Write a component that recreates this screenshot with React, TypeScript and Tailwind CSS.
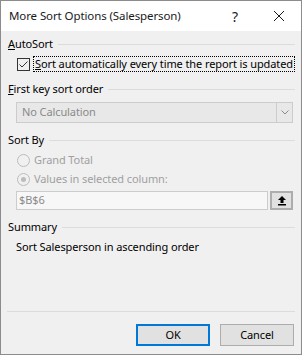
import React from "react";

const font = { fontFamily: '"Noto Sans", "Open Sans", sans-serif' };

function GroupHeader({ children }: { children: React.ReactNode }) {
  return (
    <div className="flex h-[14px] items-center pl-[7px] pr-[6px]">
      <span className="whitespace-nowrap text-[11px] leading-[14px] text-black">{children}</span>
      <div className="ml-[5px] h-px flex-1 bg-[#dcdcdc]" />
    </div>
  );
}

function Radio({ checked }: { checked?: boolean }) {
  return (
    <div className="flex h-[13px] w-[13px] items-center justify-center rounded-full border border-[#bcbcbc] bg-[#f0f0f0]">
      {checked && <div className="h-[5px] w-[5px] rounded-full bg-[#bcbcbc]" />}
    </div>
  );
}

export default function App() {
  return (
    <div
      style={font}
      className="flex h-[355px] w-[302px] flex-col border border-[#8c8c8c] bg-[#f0f0f0] text-[11px] tracking-[-0.1px] text-black"
    >
      <div className="flex h-[30px] shrink-0 items-center bg-white pl-[8px]">
        <span className="flex-1 whitespace-nowrap text-[11.5px] text-[#1a1a1a]">More Sort Options (Salesperson)</span>
        <span className="mr-[35px] text-[14px] text-[#1a1a1a]">?</span>
        <svg width="12" height="12" viewBox="0 0 12 12" className="mr-[16px]">
          <path d="M1 1 L11 11 M11 1 L1 11" stroke="#1a1a1a" strokeWidth="1" />
        </svg>
      </div>

      <div className="mt-[6px]">
        <GroupHeader>
          <span className="underline">A</span>utoSort
        </GroupHeader>
      </div>

      <div className="mt-[5px] flex h-[16px] items-center pl-[16px]">
        <div className="flex h-[13px] w-[13px] items-center justify-center border border-[#333] bg-[#f0f0f0]">
          <svg width="11" height="11" viewBox="0 0 11 11">
            <path d="M1.5 5.5 L4 8 L9.5 2.5" stroke="#333" strokeWidth="1" fill="none" />
          </svg>
        </div>
        <div className="ml-[3px] flex h-[16px] w-[262px] items-center border border-dotted border-black px-[1px]">
          <span className="whitespace-nowrap text-[11px] leading-[14px]">
            <span className="underline">S</span>ort automatically every time the report is updated
          </span>
        </div>
      </div>

      <div className="mt-[10px]">
        <GroupHeader>
          <span className="underline">F</span>irst key sort order
        </GroupHeader>
      </div>

      <div className="ml-[15px] mr-[8px] mt-[6px] flex h-[21px] items-center border border-[#cccccc] bg-[#e8e8e8]">
        <span className="flex-1 pl-[5px] text-[11px] text-[#8a8a8a]">No Calculation</span>
        <div className="flex h-full w-[16px] items-center justify-center border-l border-[#cccccc]">
          <svg width="8" height="5" viewBox="0 0 8 5">
            <path d="M0.5 0.5 L4 4 L7.5 0.5" stroke="#8a8a8a" strokeWidth="1" fill="none" />
          </svg>
        </div>
      </div>

      <div className="mt-[10px]">
        <GroupHeader>Sort By</GroupHeader>
      </div>

      <div className="mt-[5px] flex h-[16px] items-center pl-[16px]">
        <Radio />
        <span className="ml-[4px] text-[11px] text-[#a0a0a0]">Grand Total</span>
      </div>
      <div className="mt-[3px] flex h-[16px] items-center pl-[16px]">
        <Radio checked />
        <span className="ml-[4px] text-[11px] text-[#a0a0a0]">Values in selected column:</span>
      </div>

      <div className="ml-[15px] mr-[8px] mt-[4px] flex h-[19px] items-stretch gap-[2px]">
        <div className="flex flex-1 items-center border border-[#cccccc] bg-[#f7f7f7] pl-[2px]">
          <span className="text-[11px] text-[#8a8a8a]">$B$6</span>
        </div>
        <div className="flex w-[23px] items-center justify-center border-2 border-[#adadad] bg-[#e1e1e1]">
          <svg width="10" height="11" viewBox="0 0 10 11">
            <path d="M5 1 L1 5 H3.5 V8 H6.5 V5 H9 Z" fill="#000" />
            <rect x="1" y="9" width="8" height="1.5" fill="#000" />
          </svg>
        </div>
      </div>

      <div className="mt-[10px]">
        <GroupHeader>Summary</GroupHeader>
      </div>
      <div className="mt-[5px] flex h-[16px] items-center pl-[15px]">
        <span className="text-[11px]">Sort Salesperson in ascending order</span>
      </div>

      <div className="flex-1" />

      <div className="mx-[6px] h-px bg-[#dcdcdc]" />
      <div className="mb-[8px] mt-[12px] flex justify-end gap-[10px] pr-[7px]">
        <button className="h-[22px] w-[74px] border-2 border-[#0078d7] bg-[#e1e1e1] text-[11px] text-black">
          OK
        </button>
        <button className="h-[22px] w-[74px] border border-[#adadad] bg-[#e1e1e1] text-[11px] text-black">
          Cancel
        </button>
      </div>
    </div>
  );
}
